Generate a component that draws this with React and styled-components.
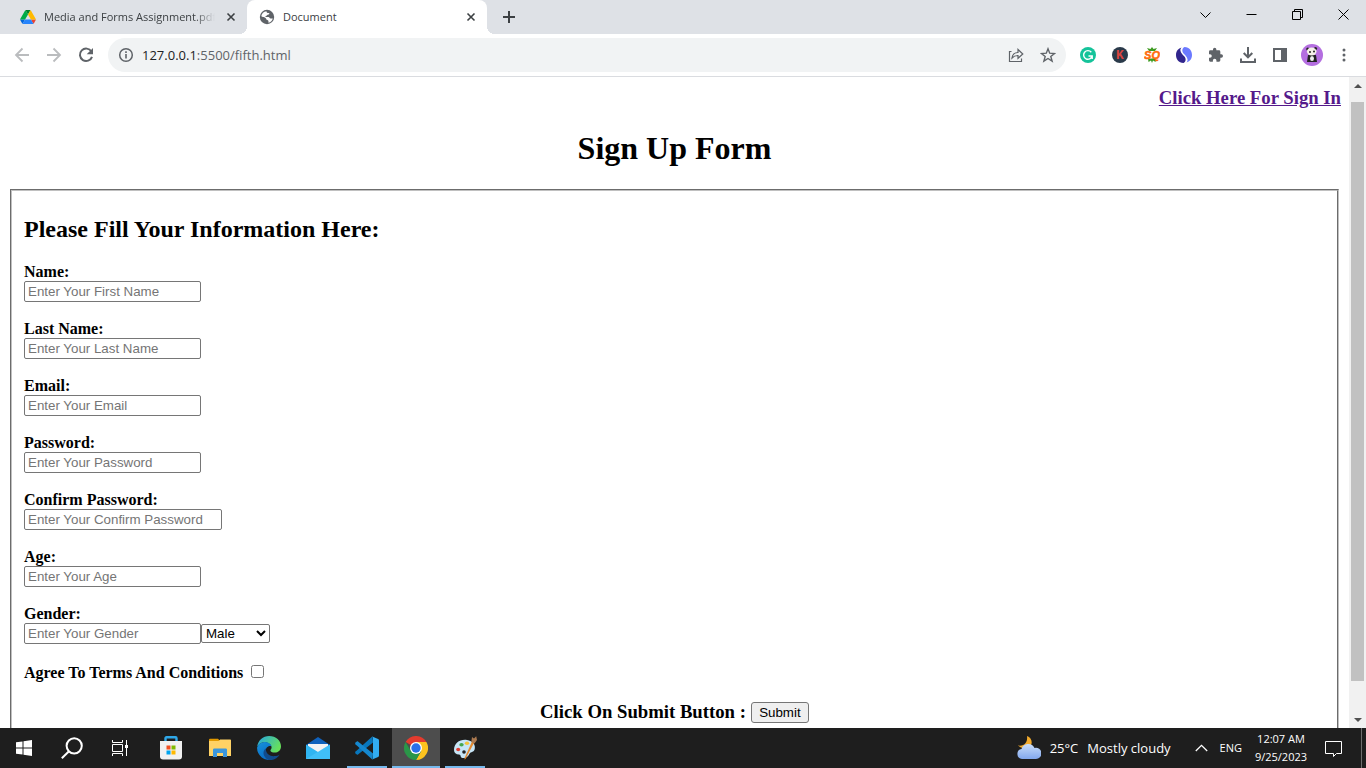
import React from "react";
import styled, { createGlobalStyle, css } from "styled-components";

const ui = `"Open Sans", "Noto Sans", sans-serif`;
const serif = `"Liberation Serif", "Times New Roman", serif`;

const GlobalStyle = createGlobalStyle`
  * { box-sizing: border-box; }
  body { margin: 0; background: #fff; font-family: ${serif}; color: #000; }
`;

const Desktop = styled.div`
  display: flex;
  flex-direction: column;
  height: 100vh;
  overflow: hidden;
`;

const PlainButton = styled.button`
  display: flex;
  align-items: center;
  justify-content: center;
  flex: none;
  margin: 0;
  padding: 0;
  border: 0;
  background: none;
  color: inherit;
`;

/* Browser chrome */
const TabStrip = styled.header`
  display: flex;
  flex: none;
  height: 34px;
  background: #dee1e6;
  font-family: ${ui};
  color: #3c4043;
`;

const Tab = styled.div`
  position: relative;
  display: flex;
  align-items: center;
  flex: none;
  width: ${(p) => (p.$active ? 240 : 247)}px;
  padding: 0 8px 0 ${(p) => (p.$active ? 12 : 20)}px;
  border-radius: 8px 8px 0 0;
  background: ${(p) => (p.$active ? "#fff" : "transparent")};
  ${(p) =>
    p.$active &&
    css`
      &::before,
      &::after {
        content: "";
        position: absolute;
        bottom: 0;
        width: 8px;
        height: 8px;
      }
      &::before {
        right: 100%;
        background: radial-gradient(circle at 0 0, transparent 8px, #fff 8px);
      }
      &::after {
        left: 100%;
        background: radial-gradient(circle at 100% 0, transparent 8px, #fff 8px);
      }
    `}
`;

const TabTitle = styled.span`
  flex: 1;
  margin: 0 8px;
  overflow: hidden;
  white-space: nowrap;
  font-size: 11px;
  line-height: 16px;
  ${(p) => p.$fade && "mask-image: linear-gradient(to right, #000 88%, transparent);"}
`;

const TabClose = styled(PlainButton)`
  width: 16px;
  height: 16px;
`;

const NewTab = styled(PlainButton)`
  width: 28px;
  height: 34px;
  margin-left: 8px;
`;

const WindowControls = styled.div`
  display: flex;
  margin-left: auto;
  color: #000;
`;

const WindowButton = styled(PlainButton)`
  width: 46px;
  height: 28px;
`;

const Toolbar = styled.nav`
  display: flex;
  align-items: center;
  flex: none;
  height: 43px;
  padding: 0 6px;
  border-bottom: 1px solid #dadce0;
  background: #fff;
  color: #5f6368;
`;

const ToolButton = styled(PlainButton)`
  width: 32px;
  height: 32px;
  color: ${(p) => (p.$faded ? "#babcbe" : "#5f6368")};
`;

const AddressBar = styled.div`
  display: flex;
  align-items: center;
  flex: 1;
  min-width: 0;
  height: 34px;
  margin: 0 6px;
  padding: 0 2px;
  border-radius: 17px;
  background: #f1f3f4;
`;

const Address = styled.div`
  flex: 1;
  font-family: ${ui};
  font-size: 13px;
  line-height: 20px;
  color: #5f6368;
`;

const Host = styled.span`
  color: #202124;
`;

/* Web page */
const Viewport = styled.div`
  display: flex;
  flex: 1;
  min-height: 0;
`;

const Page = styled.main`
  flex: 1;
  min-width: 0;
  overflow: hidden;
  padding: 10px 8px 0;
`;

const SignInLine = styled.h3`
  margin: 0;
  line-height: 22px;
  text-align: right;
`;

const SignInLink = styled.a`
  color: #551a8b;
`;

const Title = styled.h1`
  margin: 20px 0 22px;
  font-size: 32px;
  line-height: 38px;
  text-align: center;
`;

const Group = styled.fieldset`
  margin: 0 2px;
  padding: 24px 12px;
  border: 2px groove #c0c0c0;
`;

const Subtitle = styled.h2`
  margin: 0 0 20px;
  font-size: 24px;
  line-height: 28px;
`;

const Field = styled.div`
  margin-bottom: 18px;
`;

const labelText = css`
  font-size: 16px;
  line-height: 18px;
  font-weight: bold;
`;

const Label = styled.label`
  display: block;
  ${labelText}
`;

const Controls = styled.div`
  display: flex;
  align-items: center;
`;

const TextInput = styled.input`
  display: block;
  width: ${(p) => (p.$wide ? 198 : 177)}px;
  height: 21px;
  padding: 1px 3px;
  border: 1px solid #767676;
  border-radius: 2px;
  font-family: "Liberation Sans", Arial, sans-serif;
  &::placeholder { color: #757575; }
`;

const Select = styled.select`
  width: 69px;
  height: 19px;
  border: 1px solid #767676;
  border-radius: 2px;
  background: #fff;
  font-family: "Liberation Sans", Arial, sans-serif;
`;

const Terms = styled.label`
  display: flex;
  align-items: center;
  gap: 8px;
  margin-top: 20px;
  ${labelText}
`;

const Checkbox = styled.input`
  width: 13px;
  height: 13px;
  margin: 0 0 4px;
`;

const SubmitLine = styled.h3`
  display: flex;
  align-items: center;
  justify-content: center;
  gap: 5px;
  margin: 18px 0 0;
  line-height: 22px;
`;

const SubmitButton = styled.button`
  width: 58px;
  height: 21px;
  margin-top: 2px;
  padding: 0;
  border: 1px solid #767676;
  border-radius: 3px;
  background: #efefef;
  color: #000;
  font-family: "Liberation Sans", Arial, sans-serif;
`;

const ScrollBar = styled.div`
  display: flex;
  flex-direction: column;
  flex: none;
  width: 17px;
  background: #f1f1f1;
`;

const ScrollArrow = styled(PlainButton)`
  width: 17px;
  height: 17px;
`;

const ScrollTrack = styled.div`
  display: flex;
  flex-direction: column;
  flex: 1;
  padding: 8px 2px 0;
`;

const ScrollThumb = styled.div`
  height: 95%;
  background: #c1c1c1;
`;

/* Taskbar */
const TaskBar = styled.footer`
  display: flex;
  flex: none;
  height: 40px;
  background: #1e1e1e;
  color: #fff;
  font-family: ${ui};
`;

const TaskGroup = styled.div`
  display: flex;
  gap: ${(p) => p.$gap || 0}px;
  margin-right: 3px;
`;

const TaskButton = styled(PlainButton)`
  position: relative;
  width: 48px;
  height: 40px;
  background: ${(p) => (p.$active ? "#4d4d4d" : "transparent")};
  ${(p) =>
    (p.$open || p.$active) &&
    css`
      &::after {
        content: "";
        position: absolute;
        bottom: 0;
        left: ${p.$active ? 0 : 4}px;
        right: ${p.$active ? 0 : 4}px;
        height: 2px;
        background: #76b9ed;
      }
    `}
`;

const Tray = styled.div`
  display: flex;
  align-items: center;
  margin-left: auto;
`;

const Weather = styled.div`
  display: flex;
  align-items: center;
  gap: 9px;
  font-size: 13px;
  line-height: 20px;
  white-space: nowrap;
`;

const TrayButton = styled(PlainButton)`
  width: 24px;
  height: 40px;
  margin-left: 19px;
`;

const Language = styled.span`
  margin: 0 11px 0 6px;
  font-size: 11px;
  line-height: 18px;
`;

const Clock = styled.time`
  width: 56px;
  font-size: 11px;
  line-height: 18px;
  text-align: center;
  white-space: nowrap;
`;

const Notices = styled(PlainButton)`
  width: 48px;
  height: 40px;
  margin-right: 4px;
`;

const ShowDesktop = styled(PlainButton)`
  width: 5px;
  height: 40px;
  border-left: 1px solid #6e6e6e;
`;

const Svg = ({ s = 16, w, h, vb, children, ...rest }) => (
  <svg width={w || s} height={h || s} viewBox={vb || `0 0 ${w || s} ${h || s}`} fill="none" aria-hidden="true" {...rest}>
    {children}
  </svg>
);

const DriveIcon = () => (
  <Svg vb="0 0 87.3 78" w={16} h={14}>
    <path d="m6.6 66.85 3.85 6.65c.8 1.4 1.95 2.5 3.3 3.3l13.75-23.8h-27.5c0 1.55.4 3.1 1.2 4.5z" fill="#0066da" />
    <path d="m43.65 25-13.75-23.8c-1.35.8-2.5 1.9-3.3 3.3l-25.4 44a9 9 0 0 0-1.2 4.5h27.5z" fill="#00ac47" />
    <path d="m73.55 76.8c1.35-.8 2.5-1.9 3.3-3.3l1.6-2.75 7.65-13.25c.8-1.4 1.2-2.95 1.2-4.5h-27.5l5.85 11.5z" fill="#ea4335" />
    <path d="m43.65 25 13.75-23.8c-1.35-.8-2.9-1.2-4.5-1.2h-18.5c-1.6 0-3.15.45-4.5 1.2z" fill="#00832d" />
    <path d="m59.8 53h-32.3l-13.75 23.8c1.35.8 2.9 1.2 4.5 1.2h50.8c1.6 0 3.15-.45 4.5-1.2z" fill="#2684fc" />
    <path d="m73.4 26.5-12.7-22c-.8-1.4-1.95-2.5-3.3-3.3l-13.75 23.8 16.15 28h27.45c0-1.55-.4-3.1-1.2-4.5z" fill="#ffba00" />
  </Svg>
);

const GlobeIcon = () => (
  <Svg s={16}>
    <circle cx="8" cy="8" r="7.2" fill="#5f6368" />
    <path d="M7.500 2.200c-.2 1.300.8 1.900 2.300 1.800.9 0 .7 1.400-.3 1.500-1.600.2-1.400 1.300-2.700 1.500-.8.100-.6 1 .3 1h2.400c1 0 1 1.500 2 1.500h2.300c-.5 2.200-2.100 3.900-4.300 4.300-.2-.9.300-1.500-.4-2.200-.8-.8-2-.6-2.100-2C6.900 8.300 4 8.300 2.300 7.200 2.500 4.600 4.800 2.400 7.500 2.200Z" fill="#fff" />
  </Svg>
);

const CrossIcon = () => (
  <Svg s={16}><path d="m4.5 4.5 7 7m0-7-7 7" stroke="#3c4043" strokeWidth="1.6" /></Svg>
);

const StoreIcon = () => (
  <Svg w={24} h={24}>
    <path d="M6.500 6V2.300c0-.6.4-1 1-1h9c.6 0 1 .4 1 1V6" stroke="#2fa8e8" strokeWidth="2.400" />
    <path d="M1 5h22v15.500a3 3 0 0 1-3 3H4a3 3 0 0 1-3-3Z" fill="#f1f1f1" />
    <path d="M7.500 9.500h4v4h-4Z" fill="#f25022" /><path d="M12.500 9.500h4v4h-4Z" fill="#7fba00" />
    <path d="M7.500 14.500h4v4h-4Z" fill="#00a4ef" /><path d="M12.500 14.500h4v4h-4Z" fill="#ffb900" />
  </Svg>
);

const FolderIcon = () => (
  <Svg w={22} h={20}>
    <path d="M0 1.5C0 1 .4.7 1 .7h8l2 2.3H0Z" fill="#e39a00" />
    <path d="M0 3h9.5l1.6-1.5H21c.6 0 1 .4 1 1V18H0Z" fill="#ffd265" />
    <path d="M4 19v-7.2c0-.7.5-1.3 1.3-1.3h11.4c.8 0 1.3.6 1.3 1.3V19h-4v-4H8v4Z" fill="#3b96dc" />
  </Svg>
);

const EdgeIcon = () => (
  <Svg s={24}>
    <defs>
      <linearGradient id="edgeTop" x1="0" y1="0" x2="1" y2="0.5"><stop stopColor="#24a5e6" /><stop offset="1" stopColor="#66e05c" /></linearGradient>
      <linearGradient id="edgeSide" x1="0" y1="0" x2="0.6" y2="1"><stop stopColor="#1793dc" /><stop offset="1" stopColor="#0869c4" /></linearGradient>
    </defs>
    <path d="M.2 10.7C.9 4.5 6 0 12.1 0 19 0 24 4.7 24 10.3c0 4-2.8 6.3-6.2 6.3-2.7 0-4.4-1-4.4-2.1 0-.7 1.2-1.3 1.2-3 0-2.6-2.8-5.2-7-5.2-3.4 0-6 2-7.4 4.4Z" fill="url(#edgeTop)" />
    <path d="M.1 11.5c1.2-3.3 4-5.4 7.4-5.4 3.8 0 6.3 1.9 7 4.2-5-1.6-8.1 5.4-4.2 9.4 1.7 1.8 3.6 3 5.4 3.7A12 12 0 0 1 .1 11.5Z" fill="url(#edgeSide)" />
    <path d="M9 12.2c-.9 4.5 3.3 8.3 8.5 7.9 2.1-.1 3.9-.8 5.2-1.7-1.9 3.7-6.5 6.2-11.2 5.6-5.5-2.7-6.7-8.6-2.5-11.8Z" fill="#114b8c" />
  </Svg>
);

const MailIcon = () => (
  <Svg w={24} h={23}>
    <path d="M0 8 12 0l12 8v14H0Z" fill="#1062bc" />
    <path d="M2 7h20v8H2Z" fill="#f3f3f3" />
    <path d="M0 7.5 12 15l12-7.5V22H0Z" fill="#30b5f2" />
    <path d="M0 7.5V22L24 7.5V22H0Z" fill="#55cbff" opacity=".45" />
  </Svg>
);

const CodeIcon = () => (
  <Svg s={24}>
    <path d="M17.500.3 1.800 14.600.2 15.800v1.400l1.600 1.300c.4.300.9.200 1.200 0L18 6.600Z" fill="#0877bd" />
    <path d="M17.500 23.700 1.800 9.400.2 8.200V6.800l1.600-1.300c.4-.3.900-.2 1.200 0L18 17.400Z" fill="#1588cf" />
    <path d="m17.200.4 5.900 2.500c.5.3.9.8.9 1.500v15.200c0 .7-.4 1.200-.9 1.500l-5.900 2.500c.4-.3.800-.8.800-1.700V2.100c0-.8-.4-1.400-.8-1.700Z" fill="#32aef4" />
  </Svg>
);

const ChromeIcon = () => (
  <Svg s={24}>
    <path d="M12 12 1.6 6A12 12 0 0 1 22.4 6H12Z" fill="#e33b2e" />
    <path d="M12 6h10.4A12 12 0 0 1 12 24l5.2-9Z" fill="#fcc31e" />
    <path d="M1.6 6 6.8 15 12 18l5.2-3L12 24A12 12 0 0 1 1.6 6Z" fill="#2a9648" />
    <circle cx="12" cy="12" r="6" fill="#fff" /><circle cx="12" cy="12" r="4.7" fill="#2a70e8" />
  </Svg>
);

const PaintIcon = () => (
  <Svg s={26}>
    <path d="M2 15C2 8 8 4 15 5c6 .9 9 5.2 7.6 9.5-1.1 3.3-3.7 1.7-5.1 4.2-1.4 2.7-3 4.8-7 4.3-2.7-.3-1-3.4-3.5-3.5C4 19.3 2 18 2 15Z" fill="#c7e5f6" />
    <ellipse cx="6.2" cy="14.5" rx="2" ry="1.7" fill="#df3c32" /><ellipse cx="9.5" cy="9.8" rx="2.2" ry="1.8" fill="#45a64d" />
    <ellipse cx="15" cy="8.3" rx="2.2" ry="1.7" fill="#f5c33b" /><circle cx="12" cy="17" r="1.8" fill="#222" />
    <path d="m22.5 7-9 17-1 .4.1-1.4L20 6.5Z" fill="#e48a31" />
    <path d="m19.3 7 .7-5 2 1.5 2.2-2.2L25 5l-2.5 3.5Z" fill="#aa7950" />
  </Svg>
);

const CloudMoonIcon = () => (
  <Svg w={24} h={24}>
    <defs><linearGradient id="cloud" x1="0" y1="0" x2="0" y2="1"><stop stopColor="#c9ddfa" /><stop offset="1" stopColor="#82a8ee" /></linearGradient></defs>
    <path d="M10 0c6 2 7 11-1 12-3 .5-6-.5-8-2.5 6 1 10-3 9-9.5Z" fill="#f3ab2d" />
    <path d="M5 23a5 5 0 0 1-.5-9.9A7 7 0 0 1 17.5 12 5.6 5.6 0 1 1 18.5 23Z" fill="url(#cloud)" />
  </Svg>
);

const toolIcons = [
  ["Grammarly", <Svg s={16}><circle cx="8" cy="8" r="8" fill="#15c39a" /><path d="M11.3 5.3a4.3 4.3 0 1 0 .8 3.7H8.5M12.2 9v3" stroke="#fff" strokeWidth="1.4" /></Svg>],
  ["Keywords", <Svg s={16}><circle cx="8" cy="8" r="8" fill="#2a3a4a" /><text x="8" y="12" textAnchor="middle" fontFamily="Liberation Mono" fontWeight="bold" fontSize="13" fill="#d9453f">K</text></Svg>],
  ["SEOquake", <Svg s={16}><path d="m5 4-2-3 3.500 1L8 0l1.500 2L13 1l-2 3ZM4 11.500l.5 3.500 2.500-1.500L8 16l1-2.500 2.500 1.500.5-3.500Z" fill="#3d9b21" /><text x="8" y="12" textAnchor="middle" fontFamily="Liberation Sans" fontWeight="bold" fontStyle="italic" fontSize="11" fill="#ff6c0c" stroke="#ff6c0c" strokeWidth="0.500">SQ</text></Svg>],
  ["SimilarWeb", <Svg s={16}><path d="M5.5.5C3 3 5 6 8 9c2.5 2.600 2 6-.5 7C2.500 16 0 12 0 8 0 4 2.500 1.300 5.500.5Z" fill="#31258d" /><path d="M10.500 15.500C13 13 11 10 8 7 5.500 4.400 6 1 8.500 0c5 0 7.500 4 7.500 8 0 4-2.500 6.700-5.500 7.500Z" fill="#6b79ff" /></Svg>],
  ["Extensions", <Svg s={16} vb="1 0 23 24"><path d="M20.5 11H19V7a2 2 0 0 0-2-2h-4V3.500a2.500 2.500 0 0 0-5 0V5H4a2 2 0 0 0-2 2v3.800h1.500a2.700 2.700 0 0 1 0 5.400H2V20a2 2 0 0 0 2 2h3.800v-1.500a2.700 2.700 0 0 1 5.400 0V22H17a2 2 0 0 0 2-2v-4h1.500a2.500 2.500 0 0 0 0-5Z" fill="currentColor" /></Svg>],
  ["Downloads", <Svg s={18}><path d="M9 1v10M4.700 7 9 11.300 13.300 7M2 12.500v3.500h14v-3.500" stroke="currentColor" strokeWidth="2" /></Svg>],
  ["Side panel", <Svg s={16}><path d="M2 2h12v12H2Z" stroke="currentColor" strokeWidth="2" /><path d="M9 1h6v14H9Z" fill="currentColor" /></Svg>],
  ["Profile", <Svg s={22}><circle cx="11" cy="11" r="11" fill="#b46ee0" /><path d="M7 11h8l1 7H6Z" fill="#222" /><circle cx="6.800" cy="5" r="1.600" fill="#222" /><circle cx="14.500" cy="4.500" r="1.600" fill="#222" /><ellipse cx="10.700" cy="7.500" rx="4.800" ry="4" fill="#f5f0e8" /><circle cx="9" cy="8" r="1" fill="#222" /><circle cx="13" cy="7.500" r="1" fill="#222" /><ellipse cx="11" cy="14.500" rx="2" ry="2.500" fill="#eee" /></Svg>],
  ["Menu", <Svg s={16}><circle cx="8" cy="3" r="1.500" fill="currentColor" /><circle cx="8" cy="8" r="1.500" fill="currentColor" /><circle cx="8" cy="13" r="1.500" fill="currentColor" /></Svg>],
];

const windowIcons = [
  ["Search tabs", "M.5 3.500 5.500 8.500l5-5"],
  ["Minimize", "M.5 5.500h10"],
  ["Restore", "M.5 2.500h8v8h-8ZM2.500 2.500v-2h8v8h-2"],
  ["Close", "m.5.5 10 10m0-10-10 10"],
];

const fields = [
  { id: "first", label: "Name:", hint: "Enter Your First Name" },
  { id: "last", label: "Last Name:", hint: "Enter Your Last Name" },
  { id: "email", label: "Email:", hint: "Enter Your Email", type: "email" },
  { id: "password", label: "Password:", hint: "Enter Your Password", type: "password" },
  { id: "confirm", label: "Confirm Password:", hint: "Enter Your Confirm Password", type: "password", wide: true },
  { id: "age", label: "Age:", hint: "Enter Your Age" },
  { id: "gender", label: "Gender:", hint: "Enter Your Gender", options: ["Male", "Female", "Other"] },
];

export default function App() {
  return (
    <Desktop>
      <GlobalStyle />
      <TabStrip>
        <Tab>
          <DriveIcon />
          <TabTitle $fade>Media and Forms Assignment.pdf</TabTitle>
          <TabClose aria-label="Close tab"><CrossIcon /></TabClose>
        </Tab>
        <Tab $active>
          <GlobeIcon />
          <TabTitle>Document</TabTitle>
          <TabClose aria-label="Close tab"><CrossIcon /></TabClose>
        </Tab>
        <NewTab aria-label="New tab">
          <Svg s={12}><path d="M6 0v12M0 6h12" stroke="#3c4043" strokeWidth="2" /></Svg>
        </NewTab>
        <WindowControls>
          {windowIcons.map(([name, d]) => (
            <WindowButton key={name} aria-label={name}><Svg s={11}><path d={d} stroke="currentColor" /></Svg></WindowButton>
          ))}
        </WindowControls>
      </TabStrip>

      <Toolbar>
        <ToolButton aria-label="Back" $faded><Svg s={16}><path d="M15 8H2m6.500-6.500L2 8l6.500 6.500" stroke="currentColor" strokeWidth="1.800" /></Svg></ToolButton>
        <ToolButton aria-label="Forward" $faded><Svg s={16}><path d="M1 8h13M7.500 1.500 14 8l-6.500 6.500" stroke="currentColor" strokeWidth="1.800" /></Svg></ToolButton>
        <ToolButton aria-label="Reload"><Svg s={16}><path d="M13.400 4.500A6.200 6.200 0 1 0 14 9.800" stroke="currentColor" strokeWidth="2" /><path d="M15 1v6.300H8.700Z" fill="currentColor" /></Svg></ToolButton>
        <AddressBar>
          <ToolButton aria-label="Site information"><Svg s={16}><circle cx="8" cy="8" r="6.300" stroke="currentColor" strokeWidth="1.500" /><path d="M8 7v4.500M8 4.300v1.700" stroke="currentColor" strokeWidth="1.600" /></Svg></ToolButton>
          <Address><Host>127.0.0.1</Host>:5500/fifth.html</Address>
          <ToolButton aria-label="Share"><Svg s={16}><path d="M3.500 4.500h-2v10h12v-3M4 11c.5-4 3-5.500 6-5.500v-3L14.800 7 10 11.300V8.500c-3 0-4.500.8-6 2.500Z" stroke="currentColor" strokeWidth="1.200" /></Svg></ToolButton>
          <ToolButton aria-label="Bookmark"><Svg s={16}><path d="m8 1.800 1.700 4.400 4.800.3-3.700 3 1.300 4.600L8 11.500l-4.100 2.600 1.300-4.600-3.700-3 4.800-.3Z" stroke="currentColor" strokeWidth="1.400" /></Svg></ToolButton>
        </AddressBar>
        {toolIcons.map(([name, icon]) => (
          <ToolButton key={name} aria-label={name}>{icon}</ToolButton>
        ))}
      </Toolbar>

      <Viewport>
        <Page>
          <SignInLine><SignInLink href="#signin">Click Here For Sign In</SignInLink></SignInLine>
          <Title>Sign Up Form</Title>
          <Group>
            <Subtitle>Please Fill Your Information Here:</Subtitle>
            {fields.map((f) => (
              <Field key={f.id}>
                <Label htmlFor={f.id}>{f.label}</Label>
                <Controls>
                  <TextInput id={f.id} type={f.type || "text"} placeholder={f.hint} $wide={f.wide} />
                  {f.options && (
                    <Select aria-label="Gender">
                      {f.options.map((o) => <option key={o}>{o}</option>)}
                    </Select>
                  )}
                </Controls>
              </Field>
            ))}
            <Terms>Agree To Terms And Conditions <Checkbox type="checkbox" /></Terms>
            <SubmitLine>Click On Submit Button : <SubmitButton type="button">Submit</SubmitButton></SubmitLine>
          </Group>
        </Page>
        <ScrollBar>
          <ScrollArrow aria-label="Scroll up"><Svg w={8} h={4}><path d="M0 4 4 0l4 4Z" fill="#505050" /></Svg></ScrollArrow>
          <ScrollTrack><ScrollThumb /></ScrollTrack>
          <ScrollArrow aria-label="Scroll down"><Svg w={8} h={4}><path d="m0 0 4 4 4-4Z" fill="#505050" /></Svg></ScrollArrow>
        </ScrollBar>
      </Viewport>

      <TaskBar>
        <TaskGroup>
          <TaskButton aria-label="Start"><Svg s={16}><path d="M0 2.300 6.500 1.400v6.100H0ZM7.500 1.200 16 0v7.500H7.500ZM0 8.500h6.500v6.100L0 13.700ZM7.500 8.500H16V16l-8.500-1.200Z" fill="#fff" /></Svg></TaskButton>
          <TaskButton aria-label="Search"><Svg s={22}><circle cx="13.200" cy="8.800" r="7.600" stroke="#fff" strokeWidth="2" /><path d="m8 14.300-7.200 7" stroke="#fff" strokeWidth="2" /></Svg></TaskButton>
          <TaskButton aria-label="Task view"><Svg s={16}><path d="M.5 0v2.500h10V0M.5 16v-2.500h10V16M.5 4.500h10v7H.5ZM14.500 0v16" stroke="#fff" /><path d="M13 5h3v3h-3Z" fill="#fff" /></Svg></TaskButton>
        </TaskGroup>
        <TaskGroup $gap={1}>
          <TaskButton aria-label="Store"><StoreIcon /></TaskButton>
          <TaskButton aria-label="File Explorer"><FolderIcon /></TaskButton>
          <TaskButton aria-label="Edge"><EdgeIcon /></TaskButton>
          <TaskButton aria-label="Mail"><MailIcon /></TaskButton>
          <TaskButton aria-label="Code" $open><CodeIcon /></TaskButton>
          <TaskButton aria-label="Chrome" $active><ChromeIcon /></TaskButton>
          <TaskButton aria-label="Paint" $open><PaintIcon /></TaskButton>
        </TaskGroup>
        <Tray>
          <Weather><CloudMoonIcon /><span>25°C</span><span>Mostly cloudy</span></Weather>
          <TrayButton aria-label="Show hidden icons"><Svg w={13} h={8}><path d="m.8 7 5.700-5.700L12.200 7" stroke="#fff" strokeWidth="1.300" /></Svg></TrayButton>
          <Language>ENG</Language>
          <Clock>12:07 AM<br />9/25/2023</Clock>
          <Notices aria-label="Notifications"><Svg w={17} h={17}><path d="M.5 1.500h16v12h-5l-3 3v-3h-8Z" stroke="#fff" /></Svg></Notices>
          <ShowDesktop aria-label="Show desktop" />
        </Tray>
      </TaskBar>
    </Desktop>
  );
}
